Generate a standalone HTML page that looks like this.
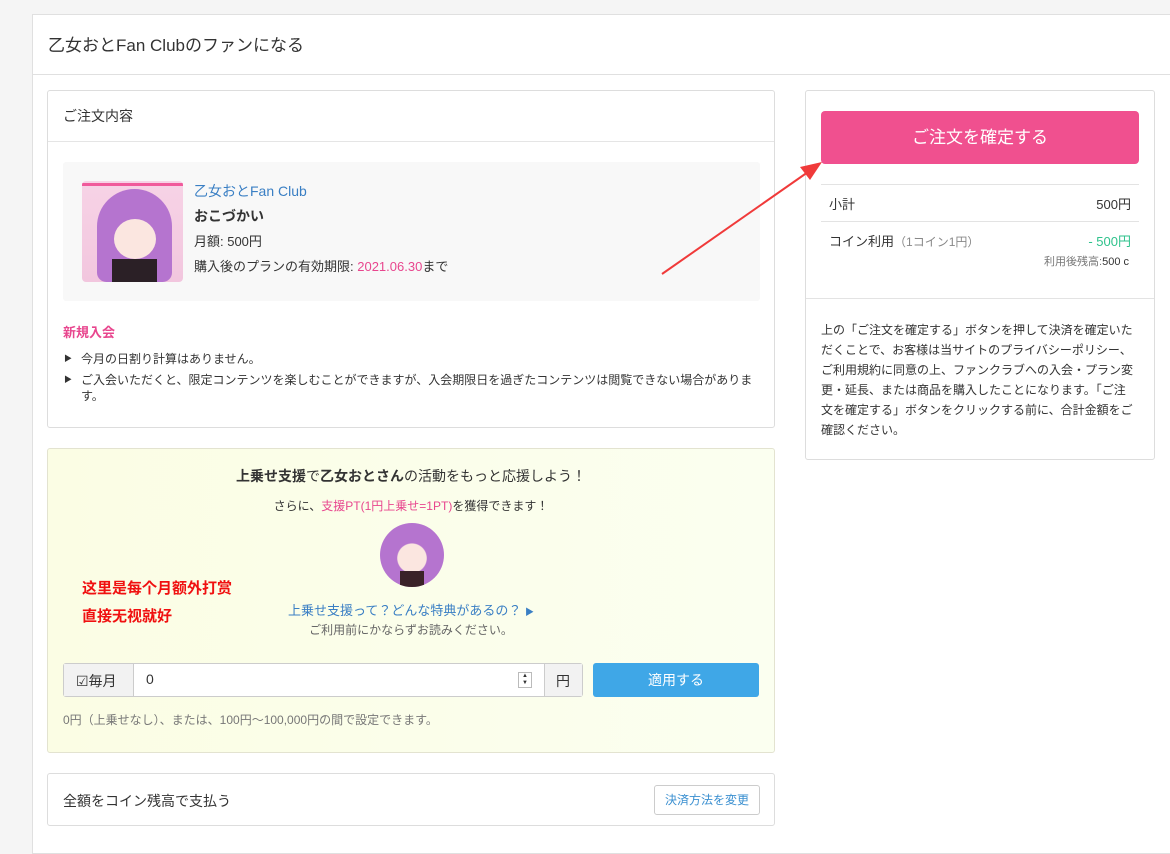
<!DOCTYPE html>
<html><head><meta charset="utf-8"><style>
*{box-sizing:border-box;margin:0;padding:0}
body{width:1170px;height:841px;overflow:hidden;background:#f5f5f5;font-family:"Liberation Sans","Noto Sans CJK JP",sans-serif;color:#333;font-size:13px;position:relative}
.main{position:absolute;left:32px;top:14px;width:1140px;height:840px;background:#fff;border:1px solid #e0e0e0}
.hdr{height:60px;border-bottom:1px solid #e0e0e0;padding:16px 0 0 15px;font-size:17px;color:#333}
.box{position:absolute;background:#fff;border:1px solid #ddd;border-radius:3px}
.abs{position:absolute}
</style></head><body>
<div class="main">
<div class="hdr">乙女おとFan Clubのファンになる</div>
</div>
<div class="box" style="left:47px;top:90px;width:728px;height:338px">
 <div style="height:51px;border-bottom:1px solid #e5e5e5;padding:15px 0 0 15px;font-size:14px">ご注文内容</div>
 <div class="abs" style="left:15px;top:71px;width:697px;height:139px;background:#f8f8f8;border-radius:3px"></div>
 <div class="abs" style="left:34px;top:90px;width:101px;height:101px;border-radius:4px;background:linear-gradient(#f7d3e6,#f2c6de);overflow:hidden">
   <div class="abs" style="left:0;top:2px;width:101px;height:3px;background:#f05a9b"></div>
   <div class="abs" style="left:15px;top:8px;width:75px;height:93px;border-radius:40px 40px 10px 10px;background:#b574cf"></div>
   <div class="abs" style="left:32px;top:38px;width:42px;height:40px;border-radius:50%;background:#fbe6e0"></div>
   <div class="abs" style="left:30px;top:78px;width:45px;height:23px;background:#2b2026"></div>
 </div>
 <div class="abs" style="left:146px;top:90px;font-size:14px;color:#3a7fc4">乙女おとFan Club</div>
 <div class="abs" style="left:146px;top:115px;font-size:14px;font-weight:bold">おこづかい</div>
 <div class="abs" style="left:146px;top:140px;font-size:13px">月額: 500円</div>
 <div class="abs" style="left:146px;top:165px;font-size:13px">購入後のプランの有効期限: <span style="color:#e8468e">2021.06.30</span>まで</div>
 <div class="abs" style="left:15px;top:231px;font-size:13px;font-weight:bold;color:#e8468e">新規入会</div>
 <div class="abs" style="left:15px;top:260px;font-size:12px;line-height:16px;width:700px">
  <div style="position:relative;padding-left:18px;margin-bottom:5px"><span style="position:absolute;left:1px;font-size:8px">▶</span>今月の日割り計算はありません。</div>
  <div style="position:relative;padding-left:18px"><span style="position:absolute;left:1px;font-size:8px">▶</span>ご入会いただくと、限定コンテンツを楽しむことができますが、入会期限日を過ぎたコンテンツは閲覧できない場合があります。</div>
 </div>
</div>
<div class="box" style="left:47px;top:448px;width:728px;height:305px;background:linear-gradient(90deg,#fbfde4,#fbfff0);border-color:#e3e3d0">
 <div class="abs" style="left:0;top:17px;width:726px;text-align:center;font-size:14px"><b>上乗せ支援</b>で<b>乙女おとさん</b>の活動をもっと応援しよう！</div>
 <div class="abs" style="left:0;top:48px;width:726px;text-align:center;font-size:12px">さらに、<span style="color:#e8468e">支援PT(1円上乗せ=1PT)</span>を獲得できます！</div>
 <div class="abs" style="left:332px;top:74px;width:64px;height:64px;border-radius:50%;background:radial-gradient(circle at 50% 55%,#fbe6e0 30%,#b574cf 32%);overflow:hidden"><div class="abs" style="left:20px;top:48px;width:24px;height:16px;background:#3a2228"></div></div>
 <div class="abs" style="left:0;top:151px;width:726px;text-align:center;font-size:13px;color:#3a7fc4">上乗せ支援って？どんな特典があるの？ <span style="font-size:9px">▶</span></div>
 <div class="abs" style="left:0;top:172px;width:726px;text-align:center;font-size:12px;color:#666">ご利用前にかならずお読みください。</div>
 <div class="abs" style="left:34px;top:126px;font-size:15px;font-weight:bold;color:#f01010;line-height:28px">这里是每个月额外打赏<br>直接无视就好</div>
 <div class="abs" style="left:15px;top:214px;width:520px;height:34px;border:1px solid #ccc;border-radius:3px;background:#fff;display:flex">
  <div style="width:70px;background:#f2f2f2;border-right:1px solid #ccc;font-size:14px;padding:7px 0 0 12px">☑毎月</div>
  <div style="flex:1;font-size:14px;padding:7px 0 0 12px;position:relative">0<span style="position:absolute;right:12px;top:8px;width:14px;height:16px;border:1px solid #bbb;font-size:6px;line-height:7px;text-align:center;color:#333">▲<br>▼</span></div>
  <div style="width:38px;background:#f2f2f2;border-left:1px solid #ccc;font-size:14px;padding:7px 0 0 11px">円</div>
 </div>
 <div class="abs" style="left:545px;top:214px;width:166px;height:34px;background:#3fa7e7;border-radius:3px;color:#fff;font-size:14px;text-align:center;line-height:34px">適用する</div>
 <div class="abs" style="left:15px;top:262px;font-size:12px;color:#777">0円（上乗せなし）、または、100円〜100,000円の間で設定できます。</div>
</div>
<div class="box" style="left:47px;top:773px;width:728px;height:53px">
 <div class="abs" style="left:15px;top:17px;font-size:14px">全額をコイン残高で支払う</div>
 <div class="abs" style="left:606px;top:11px;width:106px;height:30px;border:1px solid #ccc;border-radius:3px;color:#3a8fd0;font-size:12px;text-align:center;line-height:28px">決済方法を変更</div>
</div>
<div class="box" style="left:805px;top:90px;width:350px;height:370px">
 <div class="abs" style="left:15px;top:20px;width:318px;height:53px;background:#f0508f;border-radius:4px;color:#fff;font-size:17px;text-align:center;line-height:53px">ご注文を確定する</div>
 <div class="abs" style="left:15px;top:93px;width:318px;border-top:1px solid #e3e3e3"></div>
 <div class="abs" style="left:23px;top:103px;font-size:13px">小計</div>
 <div class="abs" style="right:23px;top:103px;font-size:13px">500円</div>
 <div class="abs" style="left:15px;top:130px;width:318px;border-top:1px solid #e3e3e3"></div>
 <div class="abs" style="left:23px;top:140px;font-size:13px">コイン利用<span style="color:#888;font-size:12px">（1コイン1円）</span></div>
 <div class="abs" style="right:23px;top:140px;font-size:13px;color:#2fc28c">- 500円</div>
 <div class="abs" style="right:25px;top:162px;font-size:11px;color:#777">利用後残高:<span style="color:#333">500 c</span></div>
 <div class="abs" style="left:0;top:207px;width:348px;border-top:1px solid #e3e3e3"></div>
 <div class="abs" style="left:15px;top:229px;width:312px;font-size:12px;line-height:20px">上の「ご注文を確定する」ボタンを押して決済を確定いただくことで、お客様は当サイトのプライバシーポリシー、ご利用規約に同意の上、ファンクラブへの入会・プラン変更・延長、または商品を購入したことになります。「ご注文を確定する」ボタンをクリックする前に、合計金額をご確認ください。</div>
</div>
<svg class="abs" style="left:0;top:0" width="1170" height="841"><line x1="662" y1="274" x2="808" y2="172" stroke="#f03a3a" stroke-width="2"/><polygon points="822,162 800,167 810,180" fill="#f03a3a"/></svg>
</body></html>
